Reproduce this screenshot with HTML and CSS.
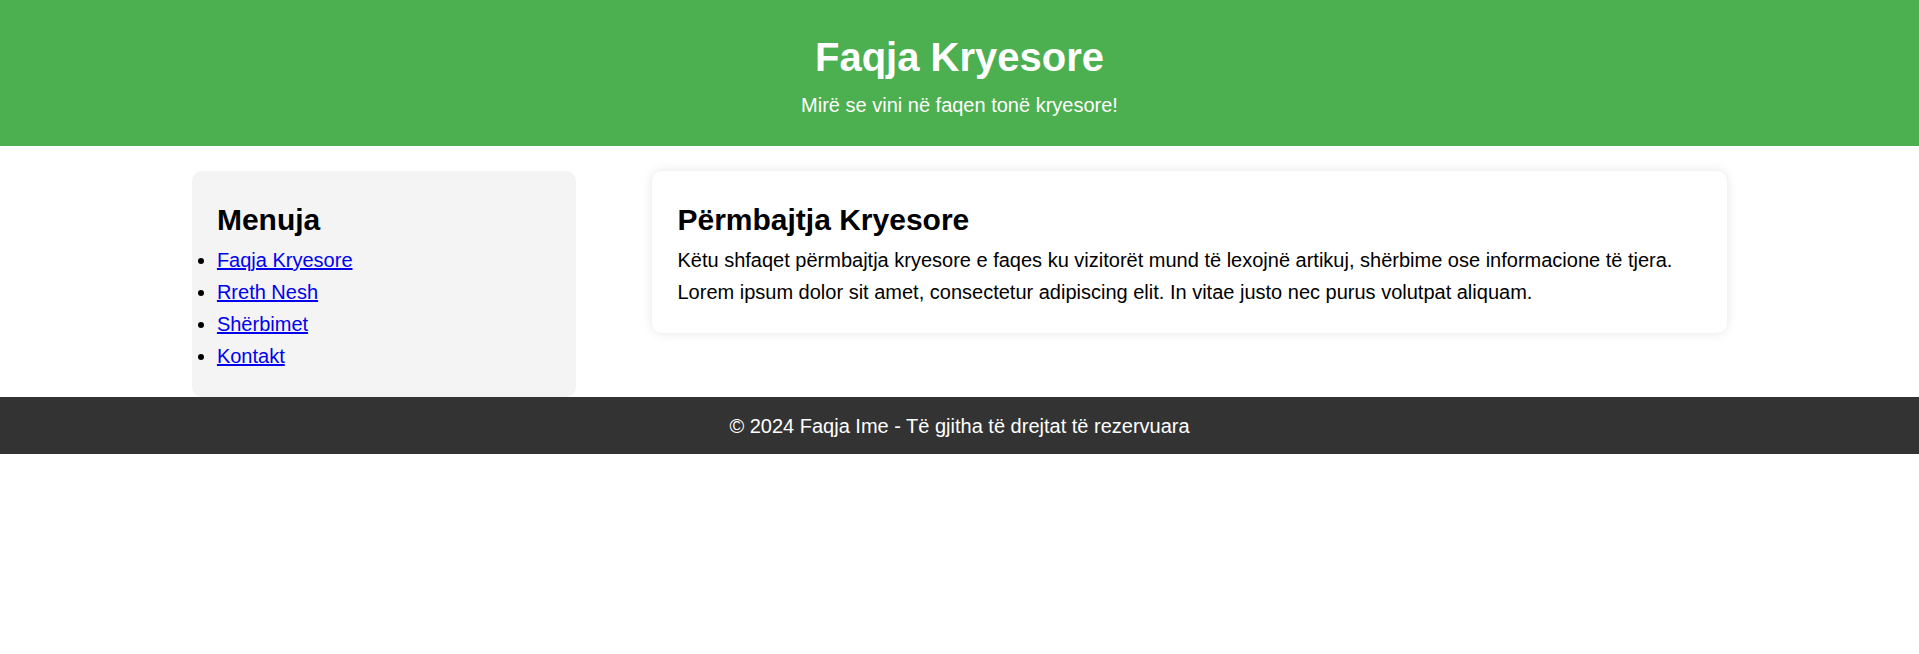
FILE: index.html
```html
<!DOCTYPE html>
<html lang="sq">
<head>
<meta charset="UTF-8">
<title>Faqja Kryesore</title>
<link rel="stylesheet" href="styles.css">
</head>
<body>
<header class="site-header">
  <h1 class="site-title">Faqja Kryesore</h1>
  <p class="site-subtitle">Mirë se vini në faqen tonë kryesore!</p>
</header>
<div class="container">
  <aside class="sidebar">
    <h2 class="section-title">Menuja</h2>
    <ul class="menu">
      <li><a href="#">Faqja Kryesore</a></li>
      <li><a href="#">Rreth Nesh</a></li>
      <li><a href="#">Shërbimet</a></li>
      <li><a href="#">Kontakt</a></li>
    </ul>
  </aside>
  <main class="content">
    <h2 class="section-title">Përmbajtja Kryesore</h2>
    <p class="content-text">Këtu shfaqet përmbajtja kryesore e faqes ku vizitorët mund të lexojnë artikuj, shërbime ose informacione të tjera. Lorem ipsum dolor sit amet, consectetur adipiscing elit. In vitae justo nec purus volutpat aliquam.</p>
  </main>
</div>
<footer class="site-footer">
  <p class="footer-text">© 2024 Faqja Ime - Të gjitha të drejtat të rezervuara</p>
</footer>
</body>
</html>
```

FILE: styles.css
```css
* {
  margin: 0;
  padding: 0;
  box-sizing: border-box;
}

body {
  font-family: "Liberation Sans", Arial, sans-serif;
  font-size: 20px;
  line-height: 1.6;
  color: #000;
  background: #fff;
}

.site-header {
  background: #4caf50;
  color: #fff;
  text-align: center;
  padding: 25px 0;
}

.site-title {
  font-size: 40px;
  font-weight: bold;
}

.site-subtitle {
  font-size: 20px;
}

.container {
  width: 80%;
  margin: 25px auto 0;
  display: flex;
  justify-content: space-between;
  align-items: flex-start;
}

.sidebar {
  width: 25%;
  background: #f4f4f4;
  padding: 25px;
  border-radius: 10px;
}

.section-title {
  font-size: 30px;
  font-weight: bold;
}

.menu {
  list-style: disc;
}

.menu a {
  color: #0000ee;
  text-decoration: underline;
}

.content {
  width: 70%;
  background: #fff;
  padding: 25px;
  border-radius: 10px;
  box-shadow: 0 0 12px rgba(0, 0, 0, 0.1);
}

.site-footer {
  background: #333;
  color: #fff;
  text-align: center;
  padding: 12.5px 0;
}
```
